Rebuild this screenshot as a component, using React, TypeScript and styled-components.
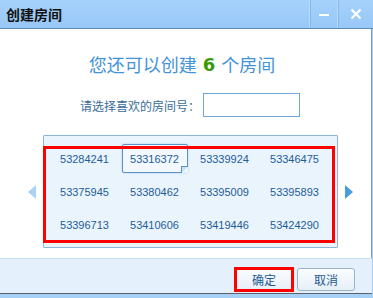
import React, { useState } from "react";
import styled, { createGlobalStyle } from "styled-components";

const GlobalStyle = createGlobalStyle`
  html, body {
    margin: 0;
    padding: 0;
    background: #a7d0f7;
  }
  * { box-sizing: border-box; }
`;

const rooms = [
  "53284241", "53316372", "53339924", "53346475",
  "53375945", "53380462", "53395009", "53395893",
  "53396713", "53410606", "53419446", "53424290",
];

const cnFont = `"Noto Sans CJK SC", "DejaVu Sans", sans-serif`;

const Window = styled.div`
  width: 373px;
  height: 298px;
  display: flex;
  flex-direction: column;
  background: #a7d0f7;
  font-family: ${cnFont};
`;

const TitleBar = styled.div`
  height: 29px;
  flex: none;
  display: flex;
  align-items: center;
  background: linear-gradient(#a5d1fb, #98c8f7);
  border-bottom: 1px solid #5f8db4;
`;

const Title = styled.div`
  flex: 1;
  padding-left: 6px;
  font-size: 14px;
  font-weight: bold;
  color: #111;
`;

const WinButton = styled.div<{ $wide?: boolean }>`
  width: ${(p) => (p.$wide ? "36px" : "28px")};
  height: 28px;
  display: flex;
  align-items: center;
  justify-content: center;
  border-left: 1px solid #b9dcfc;
  box-shadow: inset 1px 0 0 #86b6e2;
  color: #fff;
`;

const Body = styled.div`
  flex: 1;
  background: #fff;
  border-right: 1px solid #7e9cb6;
  margin-right: 1px;
  display: flex;
  flex-direction: column;
  align-items: center;
`;

const Heading = styled.div`
  margin-top: 24px;
  margin-left: -7px;
  font-size: 18px;
  color: #4393d9;
  display: flex;
  align-items: center;
  gap: 6px;
  height: 22px;
`;

const Count = styled.span`
  color: #3a9a06;
  font-weight: bold;
  font-family: "DejaVu Sans", sans-serif;
  font-size: 18px;
`;

const PickRow = styled.div`
  margin-top: 18px;
  display: flex;
  align-items: center;
  gap: 3px;
  margin-left: 9px;
`;

const Label = styled.span`
  font-size: 12px;
  color: #3a6d9a;
`;

const NumberInput = styled.input`
  width: 97px;
  height: 24px;
  border: 1px solid #6ea7d6;
  outline: none;
  padding: 0 4px;
`;

const Carousel = styled.div`
  margin-top: 18px;
  margin-left: 9px;
  display: flex;
  align-items: center;
  gap: 7px;
`;

const Arrow = styled.div<{ $dir: "left" | "right"; $dim?: boolean }>`
  width: 0;
  height: 0;
  border-top: 7px solid transparent;
  border-bottom: 7px solid transparent;
  ${(p) =>
    p.$dir === "left"
      ? `border-right: 8px solid ${p.$dim ? "#a9d2f3" : "#4b9de0"};`
      : `border-left: 8px solid ${p.$dim ? "#a9d2f3" : "#4b9de0"};`}
`;

const Panel = styled.div`
  position: relative;
  width: 295px;
  height: 113px;
  border: 1px solid #8db5d6;
  border-radius: 1px;
  background: #eaf4fd;
  padding: 7px 0 0 6px;
  display: grid;
  grid-template-columns: repeat(4, 70px);
  grid-auto-rows: 33px;
`;

const Room = styled.div<{ $active?: boolean }>`
  position: relative;
  margin: 1px 2px 3px;
  display: flex;
  align-items: center;
  justify-content: center;
  font-family: "Liberation Sans", "DejaVu Sans", sans-serif;
  font-size: 11px;
  color: #1e5c98;
  cursor: pointer;
  border: 1px solid ${(p) => (p.$active ? "#5b93c8" : "transparent")};
  border-radius: 2px;
  background: ${(p) => (p.$active ? "#f2f8fe" : "transparent")};
  box-shadow: ${(p) => (p.$active ? "0 0 2px #9cc5ea" : "none")};
`;

const Fold = styled.span`
  position: absolute;
  right: -1px;
  bottom: -1px;
  width: 7px;
  height: 7px;
  background: linear-gradient(135deg, #cfe2f4 50%, #eaf4fd 50%);
  border-left: 1px solid #5b93c8;
  border-top: 1px solid #5b93c8;
`;

const Highlight = styled.div`
  position: absolute;
  border: 3px solid #f00;
  pointer-events: none;
`;

const Footer = styled.div`
  height: 36px;
  flex: none;
  background: #e4f1fc;
  border-top: 1px solid #c3def5;
  border-bottom: 1px solid #5a6470;
  margin-right: 1px;
  display: flex;
  align-items: flex-start;
  justify-content: flex-end;
  gap: 4px;
  padding: 9px 17px 0 0;
`;

const ButtonWrap = styled.div`
  position: relative;
`;

const DialogButton = styled.button`
  width: 58px;
  height: 23px;
  border: 1px solid #9fb3c6;
  border-radius: 3px;
  background: linear-gradient(#fbfdff, #e6eef6);
  color: #1d5b93;
  font-family: ${cnFont};
  font-size: 12px;
  padding: 0;
  display: block;
`;

export default function App() {
  const [selected, setSelected] = useState("53316372");
  return (
    <>
      <GlobalStyle />
      <Window>
        <TitleBar>
          <Title>创建房间</Title>
          <WinButton>
            <svg width="12" height="12" viewBox="0 0 12 12">
              <rect x="1" y="6" width="10" height="2" fill="#fff" />
            </svg>
          </WinButton>
          <WinButton $wide>
            <svg width="12" height="12" viewBox="0 0 12 12">
              <path d="M1.5 1.5 L10.5 10.5 M10.5 1.5 L1.5 10.5" stroke="#fff" strokeWidth="2.2" />
            </svg>
          </WinButton>
        </TitleBar>
        <Body>
          <Heading>
            <span>您还可以创建</span>
            <Count>6</Count>
            <span>个房间</span>
          </Heading>
          <PickRow>
            <Label>请选择喜欢的房间号：</Label>
            <NumberInput />
          </PickRow>
          <Carousel>
            <Arrow $dir="left" $dim />
            <Panel>
              {rooms.map((r) => (
                <Room key={r} $active={r === selected} onClick={() => setSelected(r)}>
                  {r}
                  {r === selected && <Fold />}
                </Room>
              ))}
              <Highlight style={{ left: -1, top: 10, width: 292, height: 97 }} />
            </Panel>
            <Arrow $dir="right" />
          </Carousel>
        </Body>
        <Footer>
          <ButtonWrap>
            <DialogButton>确定</DialogButton>
            <Highlight style={{ left: -1, top: -1, width: 60, height: 25 }} />
          </ButtonWrap>
          <DialogButton>取消</DialogButton>
        </Footer>
        <div style={{ height: 4 }} />
      </Window>
    </>
  );
}
